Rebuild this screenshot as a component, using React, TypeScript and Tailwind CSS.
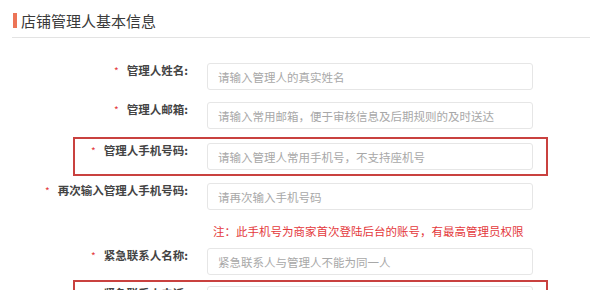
import React from 'react';

interface Field {
  label: string;
  placeholder: string;
  boxed?: boolean;
}

const font = { fontFamily: '"Noto Sans CJK SC", "Noto Sans", sans-serif' };

function Row({ field, boxed }: { field: Field; boxed?: boolean }) {
  const labelWidth = boxed ? 'w-[113px]' : 'w-[188px]';
  return (
    <div className={boxed ? 'ml-[73px] w-[475px] h-[39px] border-2 border-[#c9413f] pt-[4px] flex items-start' : 'flex items-start h-[27px]'}>
      <div className={`${labelWidth} shrink-0 text-right text-[11.5px] leading-[14px] font-bold text-[#444] whitespace-nowrap`}>
        <span className="text-[#e4393c] text-[10px] font-normal mr-[8px]">*</span>
        {field.label}
      </div>
      <input
        readOnly
        placeholder={field.placeholder}
        className="ml-[19px] w-[326px] h-[27px] shrink-0 border border-[#e6e6e6] rounded-[3px] bg-white pl-[10px] text-[11.5px] outline-none placeholder:text-[#a8a8a8]"
        style={font}
      />
    </div>
  );
}

export default function App() {
  return (
    <div className="w-[607px] h-[290px] bg-white overflow-hidden" style={font}>
      <div className="ml-[12px] w-[578px] h-[38px] border-b border-[#e3e3e3] pt-[13px] flex items-start">
        <div className="ml-[1px] w-[4px] h-[15px] bg-[#ec7457]" />
        <span className="ml-[4px] text-[15px] leading-[15px] text-[#3a3a3a]">店铺管理人基本信息</span>
      </div>

      <div className="mt-[25px]">
        <Row field={{ label: '管理人姓名:', placeholder: '请输入管理人的真实姓名' }} />
      </div>
      <div className="mt-[12px]">
        <Row field={{ label: '管理人邮箱:', placeholder: '请输入常用邮箱，便于审核信息及后期规则的及时送达' }} />
      </div>
      <div className="mt-[8px]">
        <Row boxed field={{ label: '管理人手机号码:', placeholder: '请输入管理人常用手机号，不支持座机号' }} />
      </div>
      <div className="mt-[7px]">
        <Row field={{ label: '再次输入管理人手机号码:', placeholder: '请再次输入手机号码' }} />
      </div>
      <div className="mt-[13px] ml-[213px] h-[16px] text-[11.5px] leading-[16px] text-[#e4393c] whitespace-nowrap">
        注：此手机号为商家首次登陆后台的账号，有最高管理员权限
      </div>
      <div className="mt-[9px]">
        <Row field={{ label: '紧急联系人名称:', placeholder: '紧急联系人与管理人不能为同一人' }} />
      </div>
      <div className="mt-[5px]">
        <Row boxed field={{ label: '紧急联系人电话:', placeholder: '请输入紧急联系人电话' }} />
      </div>
    </div>
  );
}
